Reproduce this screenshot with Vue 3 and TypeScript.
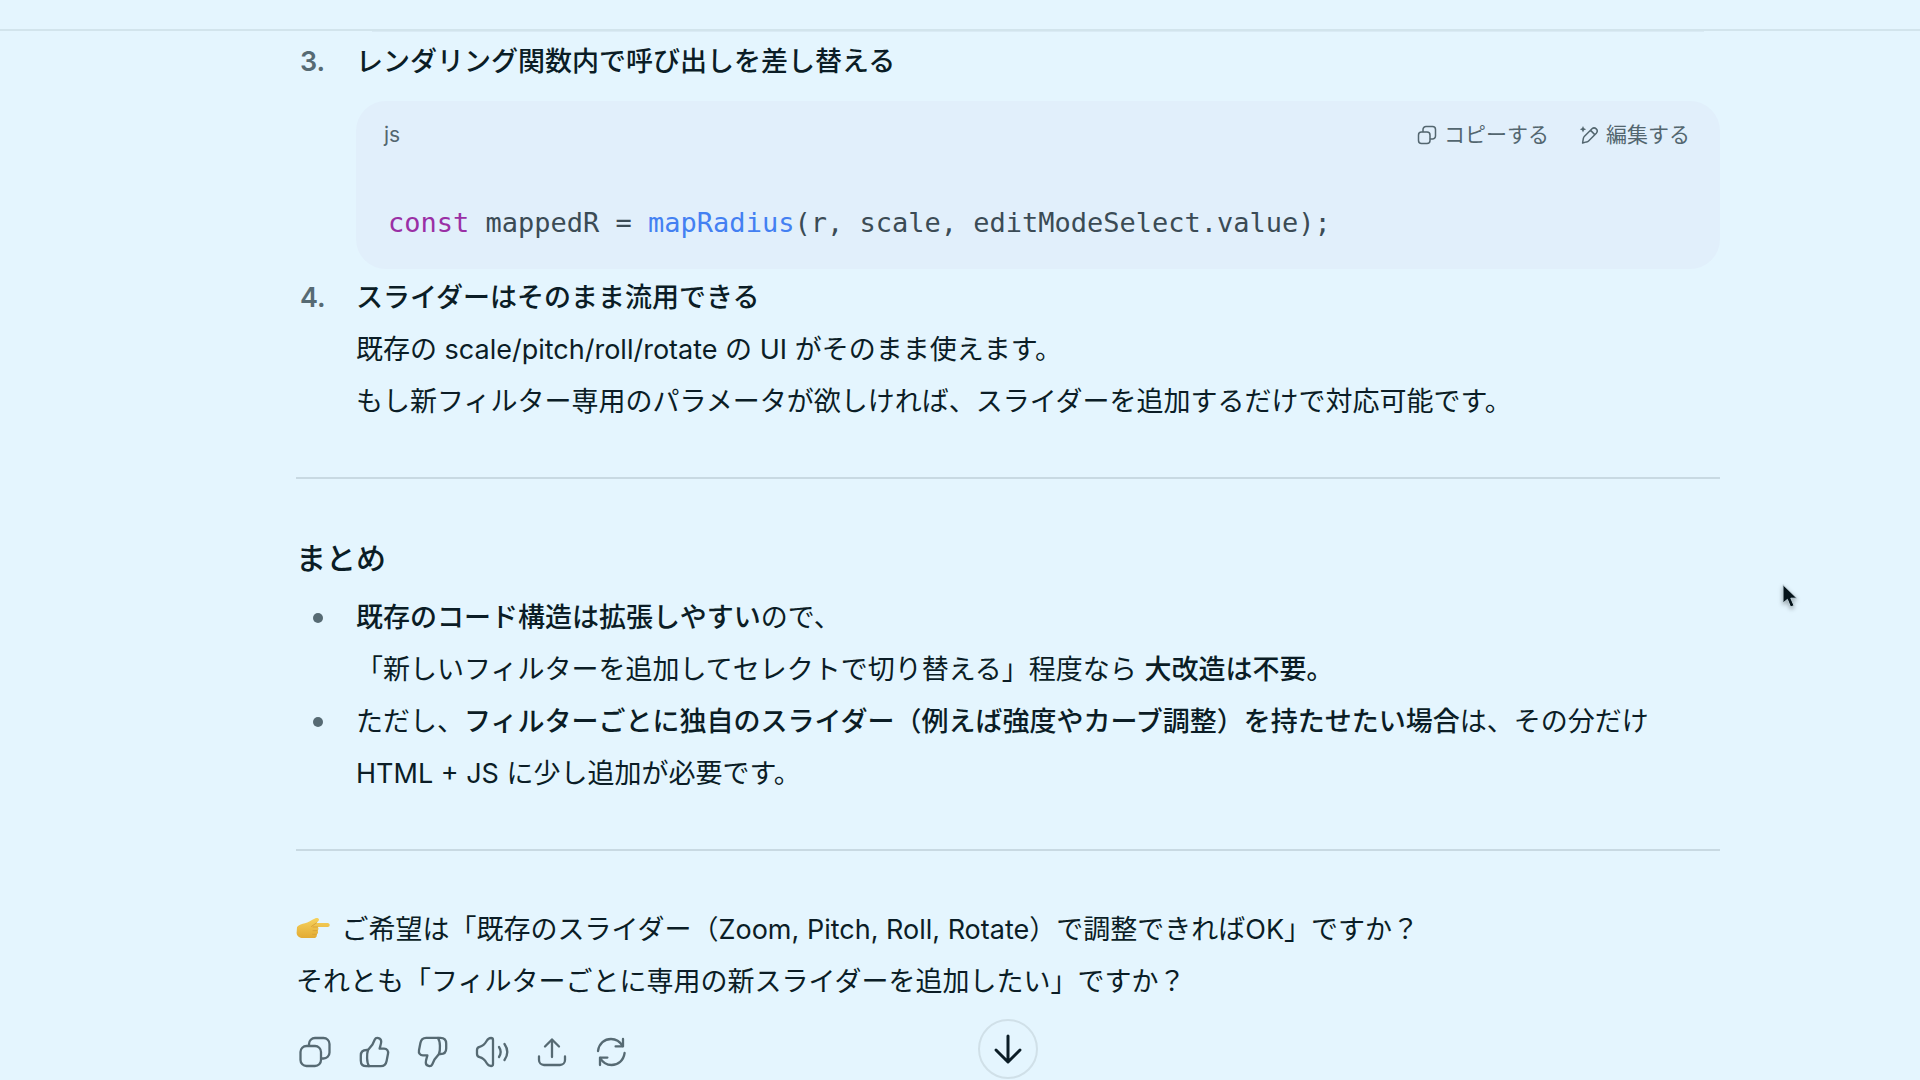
<script setup lang="ts">
import { ref } from 'vue'

interface Action {
  label: string
  paths: string[]
  flipped?: boolean
}

const thumb: string[] = [
  'M12 16 L16.5 10.5 L18.8 5.5 C20 2.8 25 3.6 25.2 7.4 C25.3 9.6 24.2 12 23.6 14.6 H28 C31 14.6 32.6 16.8 32 19.8 L30.6 27 C30 30.4 28 32.2 24.8 32.2 H10.6 C7 32.2 4.8 30 4.8 26.4 V21.6 C4.8 18.2 7 16 10.6 16 Z',
  'M12 16 C10.6 20 10.6 28.6 13 32',
]

const actions: Action[] = [
  {
    label: 'コピー',
    paths: [
      'M9.5 12 H18 A6 6 0 0 1 24 18 V26 A6 6 0 0 1 18 32 H9.5 A6 6 0 0 1 3.5 26 V18 A6 6 0 0 1 9.5 12 Z',
      'M12 11.5 V10 A6 6 0 0 1 18 4 H26.5 A6 6 0 0 1 32.5 10 V18.5 A6 6 0 0 1 26.5 24.5 H24.5',
    ],
  },
  { label: '良い回答', paths: thumb },
  { label: '良くない回答', paths: thumb, flipped: true },
  {
    label: '読み上げる',
    paths: [
      'M3 16 C3 14.2 4 13.2 5.6 12.8 C9.6 11.8 11 9.8 12.6 7 C14 4.6 15 4 17 4 C18.4 4 19 4.8 19 6 V30 C19 31.2 18.4 32 17 32 C15 32 14 31.4 12.6 29 C11 26.2 9.6 24.2 5.6 23.2 C4 22.8 3 21.8 3 20 Z',
      'M25 13 C27 16 27 20 25 23',
      'M30.5 10 C34 15 34 21 30.5 26',
    ],
  },
  {
    label: '共有する',
    paths: ['M19 23 V6', 'M12 12.5 L19 5.5 L26 12.5', 'M6 22.5 V26 A5 5 0 0 0 11 31 H27 A5 5 0 0 0 32 26 V22.5'],
  },
  {
    label: '再生成する',
    paths: [
      'M6 17 C7 9.5 12.5 5 19 5 C24 5 28 7.6 30.5 12',
      'M31 5 V12.4 H23.6',
      'M32.6 19 C31.6 26.5 26 31 19.6 31 C14.6 31 10.6 28.4 8.2 24',
      'M8 31 V23.6 H15.4',
    ],
  },
]

const code = 'const mappedR = mapRadius(r, scale, editModeSelect.value);'
const copied = ref(false)

function copyCode(): void {
  copied.value = true
  void navigator.clipboard?.writeText(code)
}

function scrollToEnd(): void {
  window.scrollTo({ top: document.body.scrollHeight, behavior: 'smooth' })
}
</script>

<template>
  <div class="page">
    <header class="topbar"></header>
    <main class="thread">
      <div class="block-tail"></div>
      <ol class="steps" start="3">
        <li>
          <span class="marker">3.</span>
          <div class="body">
            <strong>レンダリング関数内で呼び出しを差し替える</strong>
            <section class="code-block">
              <div class="code-head">
                <span>js</span>
                <div class="code-tools">
                  <button type="button" @click="copyCode">
                    <svg viewBox="0 0 20 20" aria-hidden="true">
                      <rect x="1.5" y="7" width="11.5" height="11.5" rx="3" />
                      <path d="M6 6.5 V4.5 A3 3 0 0 1 9 1.5 H15.5 A3 3 0 0 1 18.5 4.5 V11 A3 3 0 0 1 15.5 14 H13.5" />
                    </svg>
                    <span>コピーする</span>
                  </button>
                  <button type="button">
                    <svg viewBox="0 0 20 20" aria-hidden="true">
                      <path d="M3.6 18 L4.3 13.6 C4.5 12.6 4.8 12 5.5 11.3 L13 3.8 C15.8 1.2 20 5.2 17.3 8.2 L9.8 15.7 C9.1 16.4 8.5 16.7 7.5 16.9 Z M11.6 5.4 L15.8 9.6" />
                      <path class="spark" d="M4 1 L5 3.2 L7.2 4.2 L5 5.2 L4 7.4 L3 5.2 L0.8 4.2 L3 3.2 Z" />
                    </svg>
                    <span>編集する</span>
                  </button>
                </div>
              </div>
              <pre><code><span class="kw">const</span> mappedR = <span class="fn">mapRadius</span>(r, scale, editModeSelect.value);</code></pre>
            </section>
          </div>
        </li>
        <li>
          <span class="marker">4.</span>
          <div class="body">
            <strong>スライダーはそのまま流用できる</strong><br />
            既存の scale/pitch/roll/rotate の UI がそのまま使えます。<br />
            もし新フィルター専用のパラメータが欲しければ、スライダーを追加するだけで対応可能です。
          </div>
        </li>
      </ol>

      <hr />

      <h3>まとめ</h3>
      <ul class="points">
        <li>
          <span class="marker"><i class="dot"></i></span>
          <div class="body">
            <strong>既存のコード構造は拡張しやすい</strong>ので、<br />
            「新しいフィルターを追加してセレクトで切り替える」程度なら <strong>大改造は不要。</strong>
          </div>
        </li>
        <li>
          <span class="marker"><i class="dot"></i></span>
          <div class="body">
            ただし、<strong>フィルターごとに独自のスライダー（例えば強度やカーブ調整）を持たせたい場合</strong>は、その分だけ<br />
            HTML + JS に少し追加が必要です。
          </div>
        </li>
      </ul>

      <hr />

      <p class="closing">
        <svg class="hand" viewBox="0 0 34 22" role="img" aria-label="右を指す手">
          <defs>
            <linearGradient id="skin" x1="0" y1="0" x2="0" y2="1">
              <stop offset="0" stop-color="#f6d25e" />
              <stop offset="1" stop-color="#e3ab33" />
            </linearGradient>
          </defs>
          <path fill="url(#skin)" d="M1 10 C3 7.5 6 7 9 6.2 C12 5.4 15.5 3 19 1.4 C21.5 .4 24 1.6 22.6 3.8 L20.6 6 H31.6 C34.4 6 34.4 10 31.6 10 H21.6 C23 11.2 22.6 13 21.4 13.6 C22.6 15 22 16.8 20.6 17.2 C21.4 19.4 20 21 18 21 H7 C3.5 21 1 19.5 .6 16 Z" />
          <path fill="none" stroke="#d9a338" stroke-width="1" stroke-linecap="round" d="M20.4 6 L15.5 9.4 M21.6 10 H17 M21.4 13.7 H17 M20.6 17.3 H16.6" />
        </svg>
        ご希望は「既存のスライダー（Zoom, Pitch, Roll, Rotate）で調整できればOK」ですか？<br />
        それとも「フィルターごとに専用の新スライダーを追加したい」ですか？
      </p>

      <div class="actions">
        <button v-for="a in actions" :key="a.label" type="button" :aria-label="a.label">
          <svg viewBox="0 0 36 36" :class="{ flipped: a.flipped }" aria-hidden="true">
            <path v-for="d in a.paths" :key="d" :d="d" />
          </svg>
        </button>
      </div>
    </main>

    <div class="jump">
      <button type="button" aria-label="一番下へ" @click="scrollToEnd">
        <svg viewBox="0 0 32 32" aria-hidden="true">
          <path d="M16 3 V28 M4 17 L16 29 L28 17" />
        </svg>
      </button>
    </div>

    <svg class="pointer" viewBox="0 0 20 28" aria-hidden="true">
      <path d="M2 2 V20 L6.4 16.4 L9.6 24 L13 22.6 L9.8 15.2 H15.6 Z" />
    </svg>
  </div>
</template>

<style>
body {
  background: #e4f5fe;
}
</style>

<style scoped>
.page {
  position: relative;
  min-height: 100vh;
  box-sizing: border-box;
  background: #e4f5fe;
  color: #0b1d26;
  font-family: Inter, "Noto Sans CJK JP", sans-serif;
  font-size: 27px;
  line-height: 52px;
}

.topbar {
  height: 29px;
  border-bottom: 2px solid #d2e4ec;
}

.thread {
  padding: 0 200px 0 296px;
}

.block-tail {
  height: 1px;
  margin: 0 16px 4px 76px;
  background: #d9eaf4;
}

button {
  padding: 0;
  border: 0;
  background: none;
  color: inherit;
  font: inherit;
  cursor: pointer;
}

svg {
  fill: none;
  stroke: currentColor;
  stroke-linecap: round;
  stroke-linejoin: round;
}

strong {
  font-weight: 500;
}

ol,
ul {
  margin: 0;
  padding: 0;
  list-style: none;
}

li {
  display: flex;
}

.marker {
  flex: none;
  box-sizing: border-box;
  width: 60px;
  padding-left: 4px;
  color: #566a73;
  font-weight: 600;
}

.body {
  flex: 1;
  min-width: 0;
}

.code-block {
  margin: 13px 0 3px;
  padding: 16px 30px 20px 28px;
  border-radius: 30px;
  background: #e1effb;
}

.code-head {
  display: flex;
  justify-content: space-between;
  color: #53666f;
  font-size: 21px;
  line-height: 36px;
}

.code-tools {
  display: flex;
  gap: 30px;
}

.code-tools button {
  display: flex;
  align-items: center;
  gap: 7px;
}

.code-tools svg {
  width: 20px;
  height: 20px;
  stroke-width: 1.5;
}

.code-tools .spark {
  fill: currentColor;
  stroke: none;
}

pre {
  margin: 44px 0 0;
  padding-left: 4px;
  color: #3b4b55;
  font-family: "DejaVu Sans Mono", monospace;
  line-height: 52px;
}

code {
  font-family: inherit;
}

.kw {
  color: #9a2fa5;
}

.fn {
  color: #4380f2;
}

hr {
  height: 2px;
  margin: 49px 0 57px;
  border: 0;
  background: #c8d9e2;
}

h3 {
  margin: 0 0 12px;
  font-size: 30px;
  line-height: 44px;
  font-weight: 500;
}

.points .marker {
  display: flex;
  align-items: center;
  height: 52px;
  padding-left: 17px;
}

.dot {
  width: 10px;
  height: 10px;
  border-radius: 50%;
  background: #566a73;
}

.points + hr {
  margin-bottom: 53px;
}

.closing {
  margin: 0;
}

.hand {
  width: 34px;
  height: 22px;
  margin-right: 4px;
  stroke: none;
}

.actions {
  display: flex;
  gap: 23px;
  padding: 26px 1px 10px;
  color: #566a73;
}

.actions button {
  display: block;
  width: 36px;
  height: 36px;
}

.actions svg {
  display: block;
  width: 36px;
  height: 36px;
  stroke-width: 2.3;
}

.flipped {
  transform: rotate(180deg);
}

.jump {
  position: fixed;
  right: 200px;
  bottom: 1px;
  left: 296px;
  display: flex;
  justify-content: center;
  pointer-events: none;
}

.jump button {
  display: flex;
  align-items: center;
  justify-content: center;
  box-sizing: border-box;
  width: 60px;
  height: 60px;
  border: 2px solid #d0e0e8;
  border-radius: 50%;
  background: #e4f5fe;
  pointer-events: auto;
}

.jump svg {
  width: 32px;
  height: 32px;
  stroke-width: 3;
}

.pointer {
  position: absolute;
  top: 583px;
  left: 1781px;
  width: 20px;
  height: 28px;
  fill: #06141b;
  stroke: #c3d5dd;
  stroke-width: 1;
  filter: drop-shadow(0 2px 2px rgb(0 0 0 / 30%));
  pointer-events: none;
}
</style>
